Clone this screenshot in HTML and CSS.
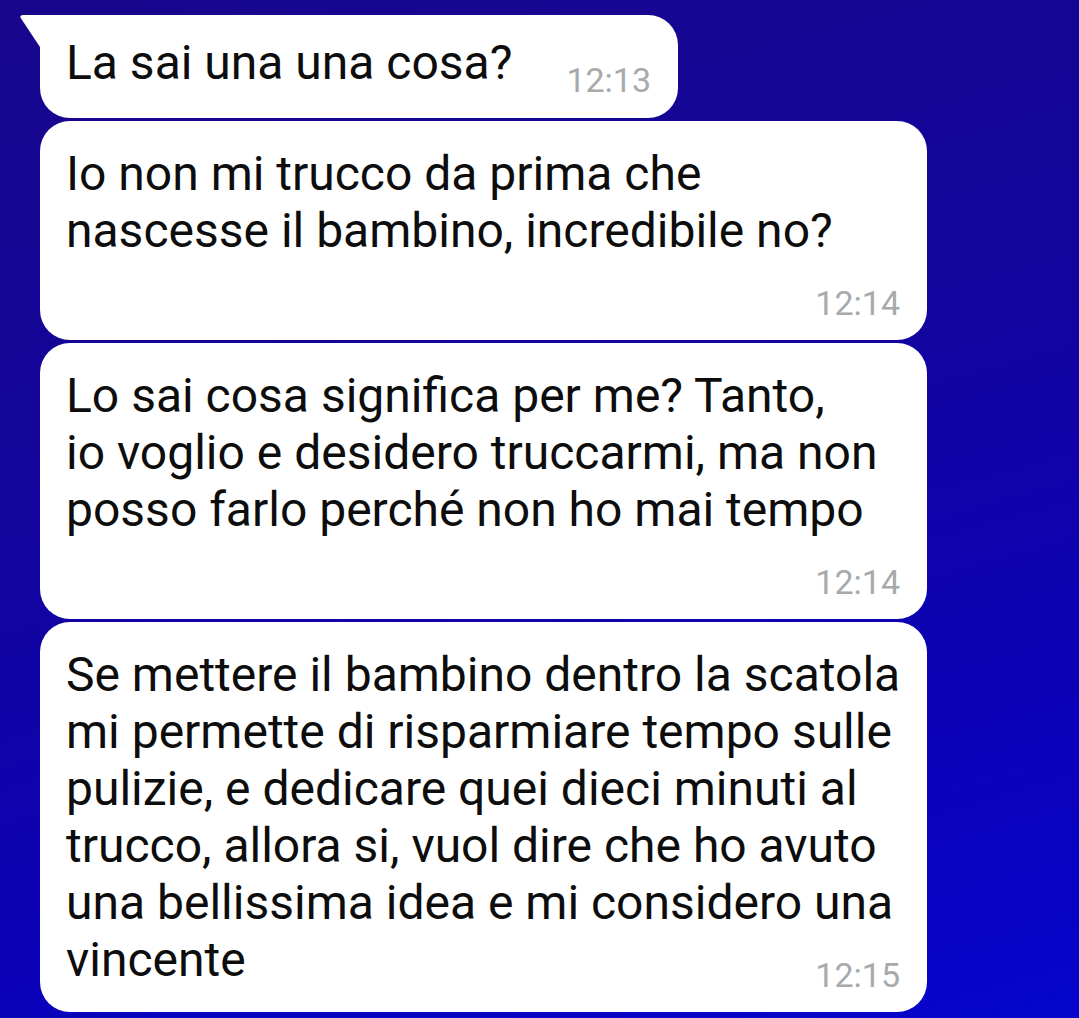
FILE: index.html
```html
<!DOCTYPE html>
<html lang="it">
<head>
<meta charset="utf-8">
<title>Chat</title>
<link rel="stylesheet" href="styles.css">
</head>
<body>
<main class="chat">
  <div class="bubble first">
    <p class="text">La sai una una cosa?</p>
    <span class="time side">12:13</span>
  </div>
  <div class="bubble wide">
    <p class="text">Io non mi trucco da prima che<br>nascesse il bambino, incredibile no?</p>
    <div class="time row">12:14</div>
  </div>
  <div class="bubble wide">
    <p class="text">Lo sai cosa significa per me? Tanto,<br>io voglio e desidero truccarmi, ma non<br>posso farlo perché non ho mai tempo</p>
    <div class="time row">12:14</div>
  </div>
  <div class="bubble wide">
    <p class="text">Se mettere il bambino dentro la scatola<br>mi permette di risparmiare tempo sulle<br>pulizie, e dedicare quei dieci minuti al<br>trucco, allora si, vuol dire che ho avuto<br>una bellissima idea e mi considero una<br>vincente<span class="time float">12:15</span></p>
  </div>
</main>
</body>
</html>
```

FILE: styles.css
```css
html, body {
  margin: 0;
  height: 100%;
}

body {
  background: linear-gradient(165deg, #18078c 0%, #12049f 45%, #0b02b8 75%, #0505cc 100%);
  font-family: Roboto, "Noto Sans", "Liberation Sans", sans-serif;
  overflow: hidden;
}

.chat {
  display: flex;
  flex-direction: column;
  align-items: flex-start;
  gap: 3px;
  padding: 15px 0 0 40px;
}

.bubble {
  position: relative;
  background: #ffffff;
  border-radius: 30px;
  padding: 24px 27px 17px 26px;
  box-sizing: border-box;
  display: flow-root;
}

.bubble.first {
  display: flex;
  align-items: flex-start;
  border-top-left-radius: 0;
  padding-top: 19px;
  padding-bottom: 18px;
}

.bubble.first::before {
  content: "";
  position: absolute;
  left: -20px;
  top: 0;
  width: 21px;
  height: 32px;
  background: #ffffff;
  clip-path: polygon(0 0, 100% 0, 100% 100%, 95% 100%, 2% 8%);
  border-top-left-radius: 3px;
}

.bubble.wide {
  width: 887px;
}

.text {
  margin: 0;
  font-size: 48px;
  line-height: 57px;
  color: #0d0d0d;
  white-space: nowrap;
}

.time {
  font-size: 34px;
  line-height: 40px;
  color: #a6aaad;
}

.time.side {
  margin-left: 54px;
  margin-top: 26px;
}

.time.row {
  margin-top: 24px;
  text-align: right;
}

.time.float {
  float: right;
  margin-top: 24px;
}
```
